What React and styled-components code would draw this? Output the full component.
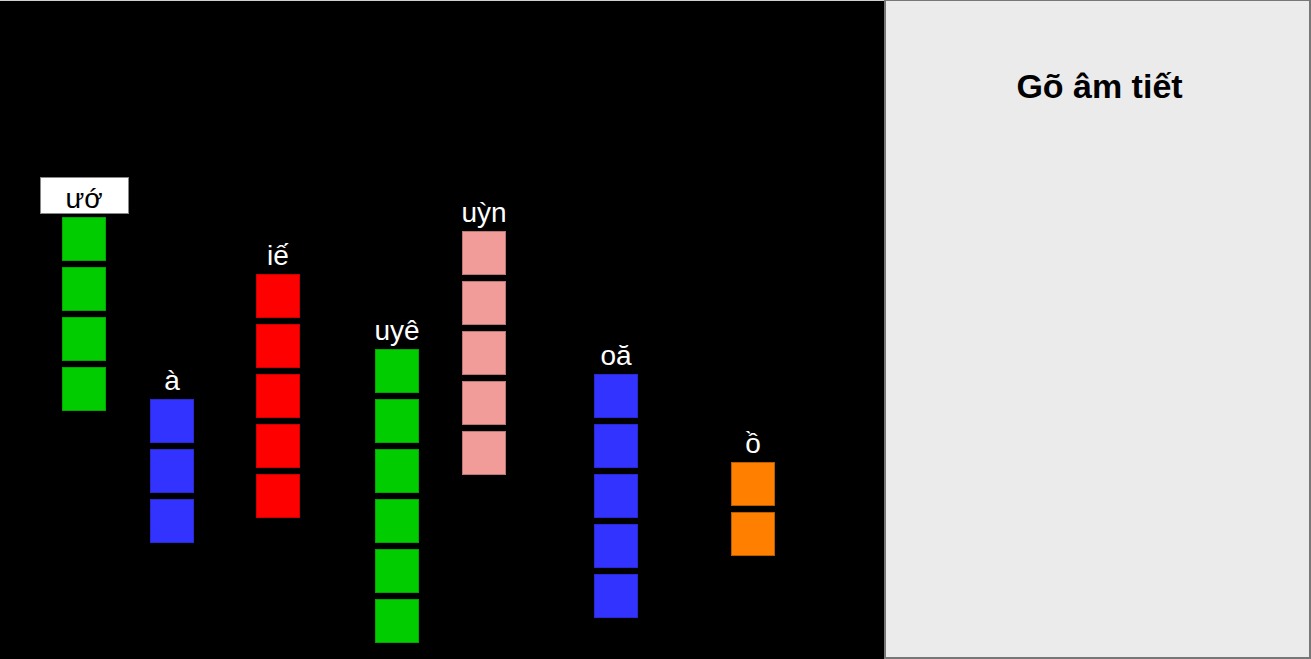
import React from "react";
import styled, { createGlobalStyle } from "styled-components";

const Global = createGlobalStyle`
  html, body { margin: 0; padding: 0; background: #fff; }
  body { font-family: "Liberation Sans", Arial, sans-serif; overflow: hidden; }
`;

const Shell = styled.div`
  display: flex;
  width: 1311px;
  height: 659px;
`;

const Canvas = styled.div`
  position: relative;
  flex: 0 0 884px;
  height: 659px;
  box-sizing: border-box;
  background: #000;
  border-top: 1px solid #d0d0d0;
  overflow: hidden;
`;

const Panel = styled.aside`
  flex: 1;
  box-sizing: border-box;
  background: #ebebeb;
  border: 2px solid #777;
  border-top-width: 1px;
  display: flex;
  flex-direction: column;
  align-items: center;
  padding-top: 66px;
  padding-left: 4px;
`;

const Title = styled.h1`
  margin: 0;
  font-size: 34px;
  font-weight: bold;
  color: #000;
`;

const Column = styled.div`
  position: absolute;
  width: 89px;
  display: flex;
  flex-direction: column;
  align-items: center;
  gap: 3px;
`;

const Label = styled.div`
  box-sizing: border-box;
  width: 89px;
  height: 37px;
  padding-top: 6px;
  text-align: center;
  font-size: 28px;
  line-height: 30px;
  white-space: nowrap;
  color: ${(p) => (p.$active ? "#000" : "#fff")};
  background: ${(p) => (p.$active ? "#fff" : "transparent")};
  border: 1px solid ${(p) => (p.$active ? "#888" : "transparent")};
`;

const Stack = styled.div`
  display: flex;
  flex-direction: column;
  gap: 6px;
`;

const Block = styled.div`
  box-sizing: border-box;
  width: 44px;
  height: 44px;
  background: ${(p) => p.$color};
  border: 1px solid ${(p) => p.$edge};
`;

const palette = {
  green: ["#00cc00", "#00a800"],
  blue: ["#3333ff", "#2a2ad0"],
  red: ["#ff0000", "#d00000"],
  pink: ["#f19c99", "#b87674"],
  orange: ["#ff8000", "#b85c00"],
};

const columns = [
  { text: "ướ", center: 84, top: 217, count: 4, color: "green", active: true },
  { text: "à", center: 172, top: 399, count: 3, color: "blue" },
  { text: "iế", center: 278, top: 274, count: 5, color: "red" },
  { text: "uyê", center: 397, top: 349, count: 6, color: "green" },
  { text: "uỳn", center: 484, top: 231, count: 5, color: "pink" },
  { text: "oă", center: 616, top: 374, count: 5, color: "blue" },
  { text: "ồ", center: 753, top: 462, count: 2, color: "orange" },
];

export default function App() {
  return (
    <>
      <Global />
      <Shell>
        <Canvas>
          {columns.map((c, i) => {
            const [fill, edge] = palette[c.color];
            return (
              <Column
                key={i}
                style={{ left: c.center - 44.5, top: c.top - 41 }}
              >
                <Label $active={c.active}>{c.text}</Label>
                <Stack>
                  {Array.from({ length: c.count }).map((_, j) => (
                    <Block key={j} $color={fill} $edge={edge} />
                  ))}
                </Stack>
              </Column>
            );
          })}
        </Canvas>
        <Panel>
          <Title>Gõ âm tiết</Title>
        </Panel>
      </Shell>
    </>
  );
}
